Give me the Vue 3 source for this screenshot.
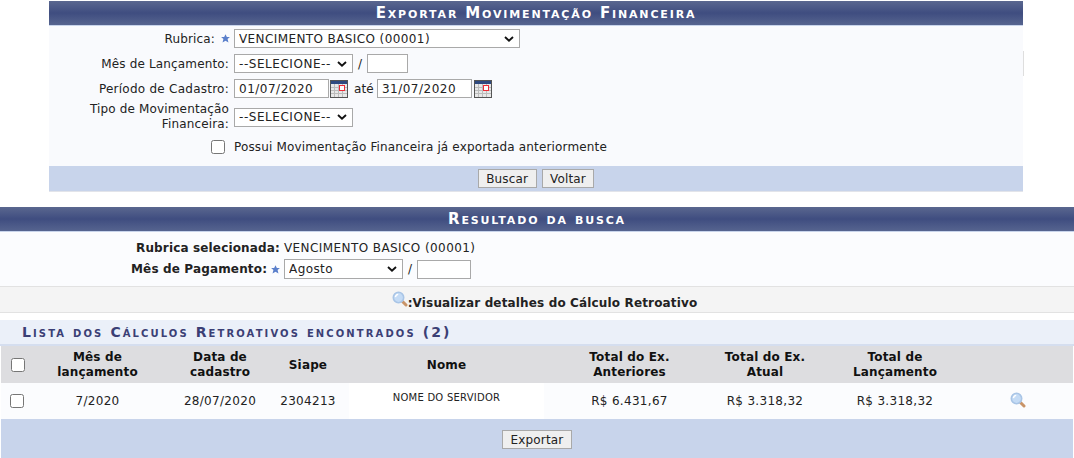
<template>
  <div class="page">
    <form class="export-form" @submit.prevent>
      <h2 class="title">Exportar Movimentação Financeira</h2>
      <div class="form-body">
        <span class="edge"></span>
        <div class="form-row">
          <label class="lbl">Rubrica:<StarIcon /></label>
          <select class="sel sel-rubrica"><option>VENCIMENTO BASICO (00001)</option></select>
        </div>
        <div class="form-row">
          <label class="lbl">Mês de Lançamento:</label>
          <select class="sel sel-mes"><option>--SELECIONE--</option></select>
          <span class="sep">/</span>
          <input class="inp inp-ano" type="text" />
        </div>
        <div class="form-row">
          <label class="lbl lbl-periodo">Período de Cadastro:</label>
          <input class="inp inp-data" type="text" value="01/07/2020" />
          <CalendarIcon />
          <span class="ate">até</span>
          <input class="inp inp-data" type="text" value="31/07/2020" />
          <CalendarIcon />
        </div>
        <div class="form-row row-tipo">
          <label class="lbl">Tipo de Movimentação Financeira:</label>
          <select class="sel sel-mes"><option>--SELECIONE--</option></select>
        </div>
        <div class="form-row row-check">
          <input class="chk" type="checkbox" />
          <span>Possui Movimentação Financeira já exportada anteriormente</span>
        </div>
      </div>
      <div class="form-foot">
        <button class="btn" type="button">Buscar</button>
        <button class="btn" type="button">Voltar</button>
      </div>
    </form>

    <section class="result">
      <h2 class="title">Resultado da busca</h2>
      <div class="result-body">
        <div class="result-line">
          <b>Rubrica selecionada:</b>
          <span class="upper">VENCIMENTO BASICO (00001)</span>
        </div>
        <div class="result-line line-pag">
          <b>Mês de Pagamento:</b>
          <StarIcon />
          <select class="sel sel-agosto"><option>Agosto</option></select>
          <span class="sep">/</span>
          <input class="inp inp-ano" type="text" />
        </div>
      </div>
      <div class="legend">
        <LensIcon />
        <b>:Visualizar detalhes do Cálculo Retroativo</b>
      </div>
      <div class="caption">Lista dos Cálculos Retroativos encontrados (2)</div>
      <table class="list">
        <colgroup>
          <col v-for="w in colWidths" :key="w.id" :style="{ width: w.px + 'px' }" />
        </colgroup>
        <thead>
          <tr>
            <th class="cell-chk"><input class="chk" type="checkbox" /></th>
            <th class="cell-mes">Mês de<br />lançamento</th>
            <th>Data de<br />cadastro</th>
            <th>Siape</th>
            <th>Nome</th>
            <th>Total do Ex.<br />Anteriores</th>
            <th>Total do Ex.<br />Atual</th>
            <th>Total de<br />Lançamento</th>
            <th class="cell-end"></th>
          </tr>
        </thead>
        <tbody>
          <tr>
            <td class="cell-chk"><input class="chk" type="checkbox" /></td>
            <td class="cell-mes num">7/2020</td>
            <td class="num">28/07/2020</td>
            <td class="num">2304213</td>
            <td class="cell-nome">NOME DO SERVIDOR</td>
            <td class="num">R$ 6.431,67</td>
            <td class="num">R$ 3.318,32</td>
            <td class="num">R$ 3.318,32</td>
            <td class="cell-end"><LensIcon /></td>
          </tr>
        </tbody>
        <tfoot>
          <tr>
            <td colspan="9" class="list-foot"><button class="btn" type="button">Exportar</button></td>
          </tr>
        </tfoot>
      </table>
    </section>
  </div>
</template>

<script setup>
import { h } from 'vue'

const colWidths = [
  { id: 'chk', px: 34 },
  { id: 'mes', px: 138 },
  { id: 'data', px: 94 },
  { id: 'siape', px: 82 },
  { id: 'nome', px: 195 },
  { id: 'ant', px: 171 },
  { id: 'atual', px: 100 },
  { id: 'lanc', px: 160 },
  { id: 'end', px: 98 }
]

const StarIcon = () =>
  h('svg', { class: 'star', width: 9, height: 9, viewBox: '0 0 10 10' }, [
    h('path', { d: 'M5 .2l1.5 3.1h3.4L7.3 5.6l1 3.9L5 7.5 1.7 9.5l1-3.9L.1 3.3h3.4z', fill: '#5a7fcb' })
  ])

const CalendarIcon = () =>
  h('svg', { class: 'cal', width: 18, height: 18, viewBox: '0 0 18 18' }, [
    h('rect', { x: 0.5, y: 0.5, width: 17, height: 17, fill: '#e8e8e8', stroke: '#555' }),
    h('rect', { x: 1, y: 1, width: 16, height: 3, fill: '#2f4a80' }),
    h('path', {
      d: 'M1 7.5h16M1 10.5h16M1 13.5h16M4.5 4v13M8.5 4v13M12.5 4v13',
      stroke: '#bcbcbc',
      fill: 'none'
    }),
    h('rect', { x: 9.5, y: 5.5, width: 5, height: 5, fill: '#fff', stroke: '#ee2b36' })
  ])

const LensIcon = () =>
  h('svg', { class: 'lens', width: 16, height: 16, viewBox: '0 0 16 16' }, [
    h('path', { d: 'M10.5 10.5l3.5 3.5', stroke: '#c99468', 'stroke-width': 3, 'stroke-linecap': 'round' }),
    h('circle', { cx: 6.5, cy: 6.5, r: 5.2, fill: '#c4dbf5', stroke: '#a9c5e6', 'stroke-width': 1.6 }),
    h('path', { d: 'M3.4 6.2a3.2 3.2 0 0 1 2.8-2.8', stroke: '#fff', fill: 'none', 'stroke-width': 1.4 })
  ])
</script>

<style>
html,
body {
  margin: 0;
  background: #fff;
}
</style>

<style scoped>
.page {
  width: 1074px;
  height: 458px;
  overflow: hidden;
  font-family: "DejaVu Sans", Verdana, sans-serif;
  font-size: 12px;
  letter-spacing: 0.15px;
  color: #222;
}

.export-form {
  width: 974px;
  margin: 1px 0 0 49px;
}

.title {
  margin: 0;
  height: 24px;
  line-height: 25px;
  text-align: center;
  font-size: 15px;
  font-weight: bold;
  font-variant: small-caps;
  letter-spacing: 1.85px;
  color: #fff;
  border-bottom: 1px solid #c8d4eb;
  background: linear-gradient(#5a678f, #3f4d80 50%, #56648f);
}

.form-body {
  position: relative;
  height: 140px;
  box-sizing: border-box;
  padding-top: 3px;
  background: #f9fafd;
}

.edge {
  position: absolute;
  top: 25px;
  right: -1px;
  width: 1px;
  height: 25px;
  background: #dedede;
}

.form-row {
  display: flex;
  align-items: center;
  height: 19px;
  margin-bottom: 6px;
}

.lbl {
  width: 180px;
  margin-right: 5px;
  text-align: right;
  display: flex;
  align-items: center;
  justify-content: flex-end;
}

.lbl-periodo {
  letter-spacing: 0.25px;
}

.lbl .star {
  margin-right: -1px;
}

.row-tipo {
  height: 26px;
  margin-bottom: 0;
}

.row-tipo .lbl {
  display: block;
  line-height: 15px;
}

.row-check {
  margin-top: 7px;
  padding-left: 160px;
}

.row-check .chk {
  margin: 0 9px 0 2px;
}

.star {
  margin: 0 0 0 6px;
}

.sel,
.inp {
  box-sizing: border-box;
  height: 19px;
  border: 1px solid #a9a9a9;
  background-color: #fff;
  font: 12px "DejaVu Sans", Verdana, sans-serif;
  color: #222;
  border-radius: 0;
}

.sel {
  appearance: none;
  padding: 0 18px 0 4px;
  letter-spacing: 0.4px;
  background-image: url("data:image/svg+xml,%3Csvg xmlns='http://www.w3.org/2000/svg' width='10' height='6'%3E%3Cpath d='M1 1l4 3.6L9 1' fill='none' stroke='%23111' stroke-width='1.9'/%3E%3C/svg%3E");
  background-repeat: no-repeat;
  background-position: right 5px center;
}

.inp {
  padding: 0 4px;
  letter-spacing: 0.5px;
}

.upper {
  letter-spacing: 0.42px;
}

.sel-rubrica {
  width: 286px;
}

.sel-mes {
  width: 119px;
  letter-spacing: 0.55px;
}

.sel-agosto {
  width: 119px;
  height: 20px;
}

.inp-ano {
  width: 54px;
}

.form-row .inp-ano {
  width: 41px;
}

.inp-data {
  width: 95px;
}

.sep {
  margin: 0 5px;
}

.ate {
  margin: 0 3px 0 6px;
}

.cal {
  margin-left: 1px;
}

.ate ~ .cal {
  margin-left: 2px;
}

.form-foot {
  height: 25px;
  display: flex;
  justify-content: center;
  align-items: center;
  gap: 5px;
  background: #c8d4eb;
  border-bottom: 1px solid #e2e4ea;
}

.btn {
  height: 19px;
  padding: 0 7.5px;
  border: 1px solid #a9a9a9;
  border-radius: 0;
  background: #efefef;
  font: 12px "DejaVu Sans", Verdana, sans-serif;
  letter-spacing: 0.15px;
  color: #222;
}

.result {
  margin-top: 15px;
}

.result-body {
  height: 54px;
  box-sizing: border-box;
  padding-top: 8px;
  background: #fbfcfe;
}

.result-line {
  display: flex;
  align-items: center;
  padding-left: 136px;
  height: 15px;
}

.result-line b {
  margin-right: 4px;
}

.line-pag {
  height: 20px;
  margin-top: 4px;
  padding-left: 131px;
}

.line-pag .star {
  margin: 0 4px 0 0;
}

.legend {
  height: 27px;
  box-sizing: border-box;
  display: flex;
  align-items: center;
  justify-content: center;
  padding: 7px 0 0 15px;
  background: #f4f4f4;
  border-top: 1px solid #e2e2e2;
  border-bottom: 1px solid #e2e2e2;
}

.legend .lens {
  margin-top: -8px;
}

.caption {
  margin-top: 7px;
  height: 26px;
  line-height: 24px;
  box-sizing: border-box;
  padding-left: 22px;
  font-size: 14px;
  font-weight: bold;
  font-variant: small-caps;
  letter-spacing: 2.1px;
  color: #3b3f75;
  background: #ebf0f9;
  border-bottom: 2px solid #d5deef;
}

.list {
  width: 1072px;
  margin-left: 1px;
  border-collapse: collapse;
  table-layout: fixed;
}

.list th {
  height: 36px;
  padding: 1px 0 0;
  background: #dddde0;
  text-align: center;
  line-height: 15px;
  color: #111;
}

.list td {
  height: 36px;
  padding: 0;
  background: #fbfcfe;
  text-align: center;
}

.num {
  letter-spacing: 0.3px;
}

.cell-mes {
  padding-right: 13px !important;
}

.cell-end {
  padding-right: 12px !important;
}

.list .cell-nome {
  background: #fff;
  font-size: 10px;
  letter-spacing: 0.25px;
  vertical-align: top;
  padding-top: 9px;
  height: 27px;
}

.list .list-foot {
  height: 37px;
  padding-top: 2px;
  background: #c8d4eb;
}

.chk {
  width: 14px;
  height: 14px;
  margin: 0;
  display: block;
}

.list td.cell-chk .chk {
  margin-left: 9px;
}

.list th.cell-chk .chk {
  margin-left: 10px;
}
</style>
